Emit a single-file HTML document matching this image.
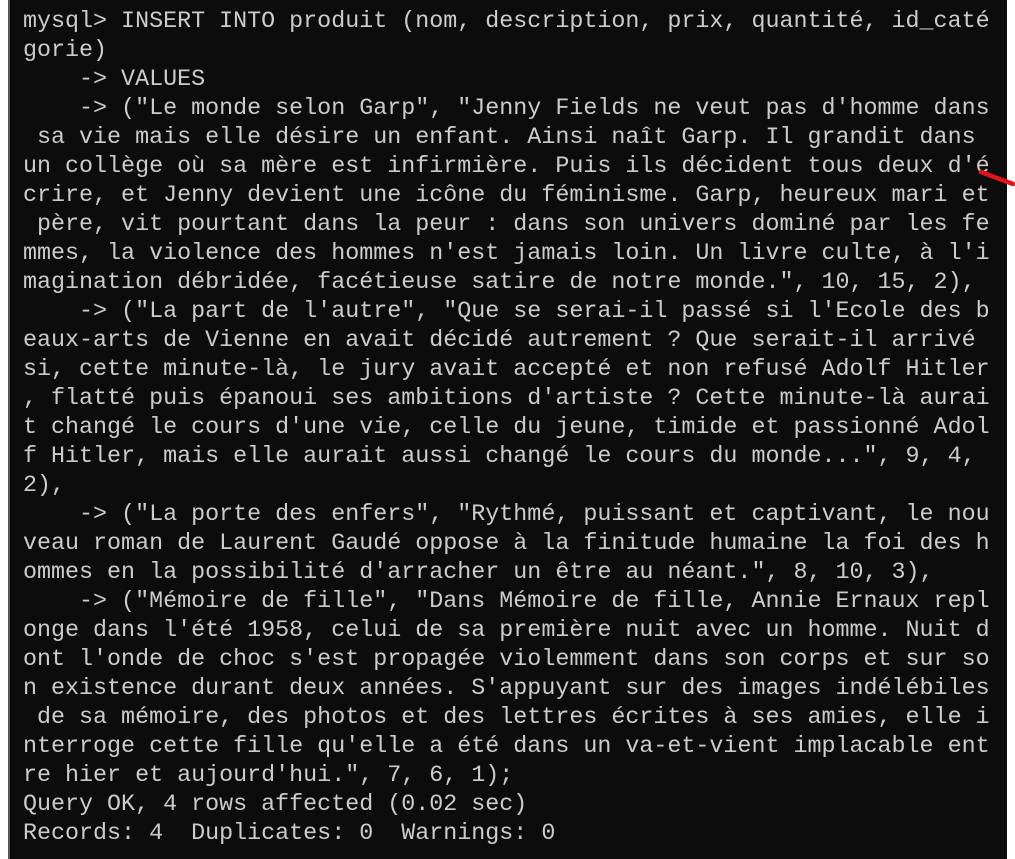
<!DOCTYPE html>
<html><head><meta charset="utf-8"><style>
html,body{margin:0;padding:0;width:1015px;height:859px;overflow:hidden;background:#fff}
#t{position:absolute;left:8px;top:0;width:997px;height:859px;background:#0c0c0c;border-left:2px solid #555}
pre{position:absolute;left:13px;top:8px;margin:0;font-family:"Liberation Mono",monospace;font-size:23.35px;line-height:29px;color:#cccccc;white-space:pre}
</style></head><body>
<div id="t"><pre>mysql&gt; INSERT INTO produit (nom, description, prix, quantité, id_caté
gorie)
    -&gt; VALUES
    -&gt; ("Le monde selon Garp", "Jenny Fields ne veut pas d'homme dans
 sa vie mais elle désire un enfant. Ainsi naît Garp. Il grandit dans
un collège où sa mère est infirmière. Puis ils décident tous deux d'é
crire, et Jenny devient une icône du féminisme. Garp, heureux mari et
 père, vit pourtant dans la peur : dans son univers dominé par les fe
mmes, la violence des hommes n'est jamais loin. Un livre culte, à l'i
magination débridée, facétieuse satire de notre monde.", 10, 15, 2),
    -&gt; ("La part de l'autre", "Que se serai-il passé si l'Ecole des b
eaux-arts de Vienne en avait décidé autrement ? Que serait-il arrivé
si, cette minute-là, le jury avait accepté et non refusé Adolf Hitler
, flatté puis épanoui ses ambitions d'artiste ? Cette minute-là aurai
t changé le cours d'une vie, celle du jeune, timide et passionné Adol
f Hitler, mais elle aurait aussi changé le cours du monde...", 9, 4,
2),
    -&gt; ("La porte des enfers", "Rythmé, puissant et captivant, le nou
veau roman de Laurent Gaudé oppose à la finitude humaine la foi des h
ommes en la possibilité d'arracher un être au néant.", 8, 10, 3),
    -&gt; ("Mémoire de fille", "Dans Mémoire de fille, Annie Ernaux repl
onge dans l'été 1958, celui de sa première nuit avec un homme. Nuit d
ont l'onde de choc s'est propagée violemment dans son corps et sur so
n existence durant deux années. S'appuyant sur des images indélébiles
 de sa mémoire, des photos et des lettres écrites à ses amies, elle i
nterroge cette fille qu'elle a été dans un va-et-vient implacable ent
re hier et aujourd'hui.", 7, 6, 1);
Query OK, 4 rows affected (0.02 sec)
Records: 4  Duplicates: 0  Warnings: 0</pre></div>
<svg style="position:absolute;left:0;top:0" width="1015" height="859"><line x1="981" y1="172" x2="1013" y2="184" stroke="#e0141a" stroke-width="4.5" stroke-linecap="round"/></svg>
</body></html>
